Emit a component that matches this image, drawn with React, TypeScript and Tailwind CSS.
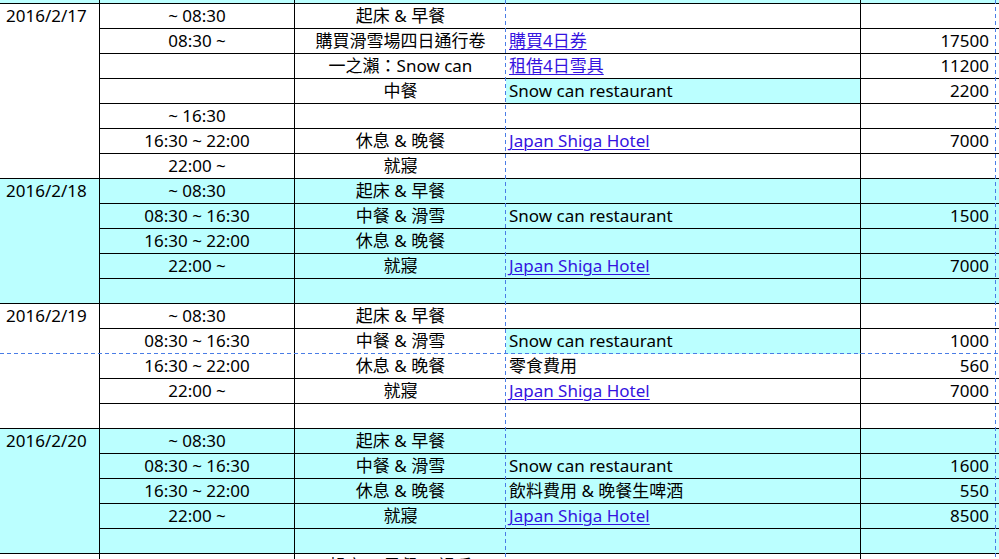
import React from "react";

type Row = {
  time?: string;
  act?: string;
  detail?: string;
  link?: boolean;
  cyanCell?: boolean;
  amount?: string;
  noBottom?: boolean;
};

type Block = { date: string; cyan: boolean; rows: Row[] };

const blocks: Block[] = [
  {
    date: "2016/2/17",
    cyan: false,
    rows: [
      { time: "~ 08:30", act: "起床 & 早餐" },
      { time: "08:30 ~", act: "購買滑雪場四日通行卷", detail: "購買4日券", link: true, amount: "17500" },
      { act: "一之瀨：Snow can", detail: "租借4日雪具", link: true, amount: "11200" },
      { act: "中餐", detail: "Snow can restaurant", cyanCell: true, amount: "2200" },
      { time: "~ 16:30" },
      { time: "16:30 ~ 22:00", act: "休息 & 晚餐", detail: "Japan Shiga Hotel", link: true, amount: "7000" },
      { time: "22:00 ~", act: "就寢" },
    ],
  },
  {
    date: "2016/2/18",
    cyan: true,
    rows: [
      { time: "~ 08:30", act: "起床 & 早餐" },
      { time: "08:30 ~ 16:30", act: "中餐 & 滑雪", detail: "Snow can restaurant", amount: "1500" },
      { time: "16:30 ~ 22:00", act: "休息 & 晚餐" },
      { time: "22:00 ~", act: "就寢", detail: "Japan Shiga Hotel", link: true, amount: "7000" },
      {},
    ],
  },
  {
    date: "2016/2/19",
    cyan: false,
    rows: [
      { time: "~ 08:30", act: "起床 & 早餐" },
      { time: "08:30 ~ 16:30", act: "中餐 & 滑雪", detail: "Snow can restaurant", cyanCell: true, amount: "1000", noBottom: true },
      { time: "16:30 ~ 22:00", act: "休息 & 晚餐", detail: "零食費用", amount: "560" },
      { time: "22:00 ~", act: "就寢", detail: "Japan Shiga Hotel", link: true, amount: "7000" },
      {},
    ],
  },
  {
    date: "2016/2/20",
    cyan: true,
    rows: [
      { time: "~ 08:30", act: "起床 & 早餐" },
      { time: "08:30 ~ 16:30", act: "中餐 & 滑雪", detail: "Snow can restaurant", amount: "1600" },
      { time: "16:30 ~ 22:00", act: "休息 & 晚餐", detail: "飲料費用 & 晚餐生啤酒", amount: "550" },
      { time: "22:00 ~", act: "就寢", detail: "Japan Shiga Hotel", link: true, amount: "8500" },
      {},
    ],
  },
];

const spanClass: Record<number, string> = {
  5: "row-span-5",
  7: "row-span-7",
};

const GRID = "grid grid-cols-[100px_195px_211px_355px_134px_1fr]";

function BlockView({ b }: { b: Block }) {
  return (
    <div className={`${GRID} ${b.cyan ? "bg-[#bbffff]" : "bg-white"}`}>
      <div className={`${spanClass[b.rows.length]} border-r border-b border-black pl-[6px] leading-[24px] whitespace-nowrap`}>
        {b.date}
      </div>
      {b.rows.map((r, i) => {
        const bb = r.noBottom ? "border-b border-b-transparent" : "border-b border-black";
        return (
          <React.Fragment key={i}>
            <div className={`h-[25px] border-r border-black ${bb} text-center leading-[24px] whitespace-nowrap`}>
              {r.time ?? ""}
            </div>
            <div className={`h-[25px] ${bb} text-center leading-[24px] whitespace-nowrap`}>{r.act ?? ""}</div>
            <div
              className={`h-[25px] border-r border-black ${bb} pl-[3px] leading-[24px] whitespace-nowrap overflow-hidden ${
                r.cyanCell ? "bg-[#bbffff]" : ""
              }`}
            >
              {r.detail ? (
                r.link ? (
                  <span className="text-[#3513e0] underline underline-offset-[2px] decoration-1">{r.detail}</span>
                ) : (
                  r.detail
                )
              ) : (
                ""
              )}
            </div>
            <div className={`h-[25px] ${bb} text-right pr-[6px] leading-[24px] whitespace-nowrap`}>{r.amount ?? ""}</div>
            <div className={`h-[25px] ${bb}`}></div>
          </React.Fragment>
        );
      })}
    </div>
  );
}

export default function App() {
  return (
    <div className="relative w-[999px] h-[559px] overflow-hidden bg-white text-black text-[17px] font-['Noto_Sans','Noto_Sans_CJK_TC',sans-serif]">
      {/* top partial row */}
      <div className={`${GRID} bg-[#bbffff] h-[4px]`}>
        <div className="border-r border-b border-black"></div>
        <div className="border-r border-b border-black"></div>
        <div className="border-b border-black"></div>
        <div className="border-r border-b border-black"></div>
        <div className="border-b border-black"></div>
        <div className="border-b border-black"></div>
      </div>
      {blocks.map((b) => (
        <BlockView key={b.date} b={b} />
      ))}
      {/* bottom partial row */}
      <div className={`${GRID} bg-white`}>
        <div className="h-[25px] border-r border-black"></div>
        <div className="h-[25px] border-r border-black"></div>
        <div className="h-[25px] text-center leading-[24px] whitespace-nowrap">起床 &amp; 早餐 &amp; 退房</div>
        <div className="h-[25px] border-r border-black"></div>
        <div className="h-[25px]"></div>
        <div className="h-[25px]"></div>
      </div>

      {/* page-break guides */}
      <div className="absolute left-[505px] top-0 h-full w-px bg-[image:repeating-linear-gradient(to_bottom,#4a7de6_0px,#4a7de6_4px,transparent_4px,transparent_7px)]"></div>
      <div className="absolute left-[995px] top-0 h-full w-px bg-[image:repeating-linear-gradient(to_bottom,#4a7de6_0px,#4a7de6_4px,transparent_4px,transparent_7px)]"></div>
      <div className="absolute left-0 top-[353px] w-full h-px bg-[image:repeating-linear-gradient(to_right,#4a7de6_0px,#4a7de6_4px,transparent_4px,transparent_7px)]"></div>
    </div>
  );
}
